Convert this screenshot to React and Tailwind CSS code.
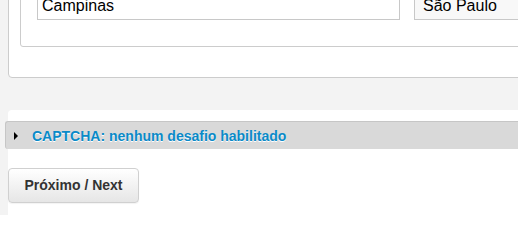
import React from "react";

export default function App() {
  const font = { fontFamily: '"Liberation Sans", Arial, sans-serif' };
  return (
    <div
      className="w-[518px] h-[215px] overflow-hidden bg-[#f3f3f3] text-black"
      style={font}
    >
      <div className="-mt-[34px] ml-[8px] w-[560px] bg-white border border-[#cccccc] rounded-[4px] pt-[10px] pb-[30px] pl-[11px]">
        <div className="border border-[#cccccc] rounded-[3px] pt-[10px] pb-[26px] pl-[16px]">
          <div className="flex gap-[14px]">
            <div className="w-[363px] h-[32px] border border-[#c8c8c8] bg-white pl-[4px] pt-[3px] flex items-center text-[16px] leading-none shrink-0">
              Campinas
            </div>
            <div className="w-[200px] h-[32px] border border-[#c8c8c8] bg-[#f8f8f8] pl-[8px] pt-[3px] flex items-center text-[16px] leading-none shrink-0">
              São Paulo
            </div>
          </div>
        </div>
      </div>

      <div className="mt-[32px] ml-[8px] w-[560px] h-[200px] bg-white rounded-tl-[4px] pt-[11px]">
        <div className="-ml-[3px] h-[28px] bg-[#d9d9d9] border-t border-l border-[#c6c6c6] rounded-l-[3px] flex items-center">
          <svg width="5" height="8" viewBox="0 0 5 8" className="ml-[8px]">
            <polygon points="0,0 4,4 0,8" fill="#000" />
          </svg>
          <span
            className="ml-[13px] text-[14px] font-bold text-[#0a8ac8] leading-none"
            style={{ textShadow: "0 1px 0 #ffffff" }}
          >
            CAPTCHA: nenhum desafio habilitado
          </span>
        </div>
        <button className="mt-[19px] h-[35px] w-[131px] border border-[#d0d0d0] rounded-[4px] bg-gradient-to-b from-white to-[#e6e6e6] text-[14px] font-bold text-[#333333] flex items-center justify-center shadow-[0_1px_1px_rgba(0,0,0,0.05)]">
          Próximo / Next
        </button>
      </div>
    </div>
  );
}
